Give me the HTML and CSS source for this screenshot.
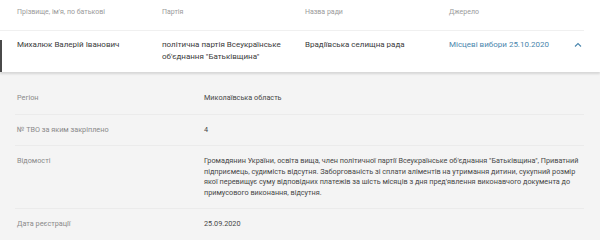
FILE: index.html
```html
<!DOCTYPE html>
<html>
    <head>
        <link rel="stylesheet" href="styles.css">
    </head>
    <body>
        <div class="table">
            <div class="head">
                <div>Прізвище, ім'я, по батькові</div>
                <div>Партія</div>
                <div>Назва ради</div>
                <div>Джерело</div>
                <div></div>
            </div>
            <div class="row open">
                <div>Михалюк Валерій Іванович</div>
                <div>політична партія Всеукраїнське об'єднання "Батьківщина"</div>
                <div>Врадіївська селищна рада</div>
                <div><a href="#" class="source">Місцеві вибори 25.10.2020</a></div>
                <div class="toggle">
                    <svg width="8" height="5" viewBox="0 0 8 5"><polyline points="1,4.5 4,1.5 7,4.5" fill="none" stroke="#4a86ad" stroke-width="1.1"/></svg>
                </div>
            </div>
            <div class="details">
                <div class="item">
                    <div class="label">Регіон</div>
                    <div class="value">Миколаївська область</div>
                </div>
                <div class="item">
                    <div class="label">№ ТВО за яким закріплено</div>
                    <div class="value">4</div>
                </div>
                <div class="item">
                    <div class="label">Відомості</div>
                    <div class="value">Громадянин України, освіта вища, член політичної партії Всеукраїнське об'єднання "Батьківщина", Приватний підприємець, судимість відсутня. Заборгованість зі сплати аліментів на утримання дитини, сукупний розмір якої перевищує суму відповідних платежів за шість місяців з дня пред'явлення виконавчого документа до примусового виконання, відсутня.</div>
                </div>
                <div class="item">
                    <div class="label">Дата реєстрації</div>
                    <div class="value">25.09.2020</div>
                </div>
            </div>
        </div>
    </body>
</html>
```

FILE: styles.css
```css
body {
    margin: 0;
    font-family: Roboto, "Noto Sans", sans-serif;
    background: #fff;
    color: #333;
}
.head, .row {
    display: grid;
    grid-template-columns: 145px 143px 144px 1fr 30px;
    padding-left: 17px;
}
.head {
    height: 23px;
    padding-top: 7px;
    font-size: 7px;
    line-height: 10px;
    color: #9a9a9a;
    border-bottom: solid 1px #f0f0f0;
    margin-right: 16px;
}
.row {
    position: relative;
    padding-top: 8px;
    padding-bottom: 9px;
    font-size: 8px;
    line-height: 12px;
    color: #3a3a3a;
    box-shadow: 0 2px 2px rgba(0, 0, 0, 0.12);
    z-index: 1;
}
.row > div {
    padding-right: 10px;
}
.open::before {
    content: "";
    position: absolute;
    left: 0;
    top: 9px;
    bottom: 0;
    width: 2px;
    background: #4a4a4a;
}
.source {
    color: #4a86ad;
    text-decoration: none;
}
.toggle {
    padding-left: 4px;
}
.details {
    background: #f4f4f4;
    padding: 11px 16px 0 15px;
    height: 200px;
}
.item {
    display: grid;
    grid-template-columns: 187px 1fr;
    padding: 10px 0 10px 2px;
    border-bottom: solid 1px #ebebeb;
    font-size: 7.27px;
    line-height: 10.5px;
}
.item:last-child {
    border-bottom: none;
}
.label {
    color: #8a8a8a;
}
.value {
    color: #474747;
    padding-right: 2px;
}
```
